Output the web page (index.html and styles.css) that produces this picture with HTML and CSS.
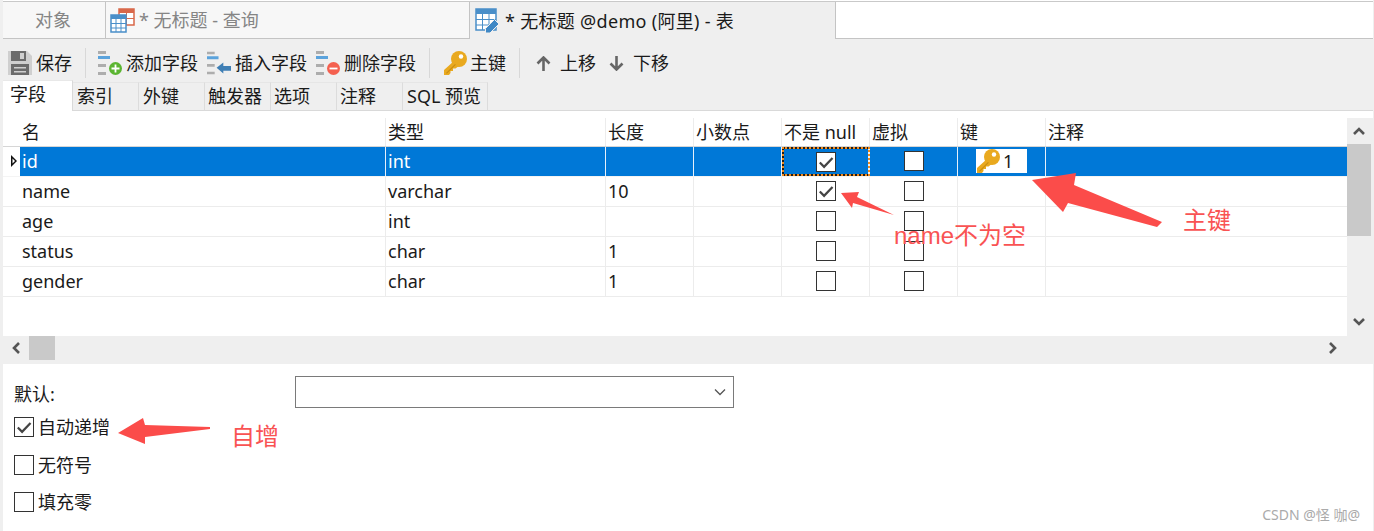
FILE: index.html
```html
<!DOCTYPE html>
<html lang="zh">
<head>
<meta charset="utf-8">
<title>无标题 @demo (阿里) - 表</title>
<link rel="stylesheet" href="styles.css">
</head>
<body>
<svg width="0" height="0" class="defs">
  <defs>
    <symbol id="key" viewBox="0 0 24 24">
      <circle cx="16" cy="8" r="8" fill="#e9a91f"/>
      <path fill="#e9a91f" d="M11 10L1 19v5h5l1.500-2v-2h2.500v-2.500h2.500L17 14z"/>
      <path fill="#c98d12" d="M3 22l9-9 .8.8-9 9z"/>
      <circle cx="18" cy="5.500" r="2.200" fill="#fff"/>
    </symbol>
    <symbol id="check" viewBox="2 2 16 16">
      <path d="M4.500 10.500l3.800 3.800 7.500-7.800" fill="none" stroke="#444" stroke-width="2"/>
    </symbol>
    <symbol id="lines" viewBox="0 0 24 24">
      <path fill="#adadad" d="M0 0h8v3H0zM0 13h8v3H0zM0 21h8v3H0z"/>
      <path fill="#5ba3dc" d="M0 5h12v3H0z"/>
    </symbol>
  </defs>
</svg>
<div class="app">
  <div class="tabs">
    <div class="tab tab-obj">对象</div>
    <div class="tab tab-query">
      <svg class="tab-icon" width="25" height="25" viewBox="0 0 25 25">
        <path fill="#fff" stroke="#d9684a" stroke-width="1.500" d="M9 1h15v16H9z"/>
        <path fill="#d9684a" d="M9 1h15v4H9z"/>
        <path stroke="#d9684a" d="M16.500 5v12M9 10.500h15"/>
        <path fill="#fff" stroke="#4a8fc9" stroke-width="1.500" d="M1 7h15v17H1z"/>
        <path fill="#4a8fc9" d="M1 7h15v4H1z"/>
        <path stroke="#4a8fc9" d="M6 11v13M11 11v13M1 15.500h15M1 20h15"/>
      </svg>
      <span>* 无标题 - 查询</span>
    </div>
    <div class="tab tab-active">
      <svg class="tab-icon" width="25" height="25" viewBox="0 0 25 25">
        <path fill="#fff" stroke="#4a8fc9" stroke-width="1.500" d="M1 1h20v21H1z"/>
        <path fill="#4a8fc9" d="M1 1h20v5H1z"/>
        <path stroke="#4a8fc9" d="M7.500 6v16M14 6v16M1 11.500h20M1 17h20"/>
        <path fill="#3f88c5" stroke="#efefef" d="M10.500 20.500l9-9 4.500 4.500-9 9h-4.500z"/>
      </svg>
      <span class="tab-title">* 无标题 @demo (阿里) - 表</span>
    </div>
    <div class="tab-rest"></div>
  </div>

  <div class="toolbar">
    <div class="tool tool-save">
      <svg width="24" height="24" viewBox="0 0 24 24">
        <path fill="#cfcfcf" d="M0 0h19l5 5v19H0z"/>
        <path fill="#6b6b6b" d="M3 0h15v10H3zM3 13h18v11H3z"/>
        <path fill="#cfcfcf" d="M12 2h4v6h-4z"/>
        <path fill="#cfcfcf" d="M6 16h12v1.500H6zM6 20h12v1.500H6z"/>
      </svg>
      <span>保存</span>
    </div>
    <div class="sep"></div>
    <div class="tool tool-field">
      <svg width="24" height="24" viewBox="0 0 24 24">
        <use href="#lines"/>
        <circle cx="17.500" cy="17.500" r="6.500" fill="#5bb531"/>
        <path stroke="#fff" stroke-width="1.800" d="M13.500 17.500h8M17.500 13.500v8"/>
      </svg>
      <span>添加字段</span>
    </div>
    <div class="tool tool-field">
      <svg width="24" height="24" viewBox="0 0 25 24">
        <use href="#lines" width="24" height="24"/>
        <path fill="#3f7fb5" d="M10 17l7-5.500V15h8v5h-8v3z"/>
      </svg>
      <span>插入字段</span>
    </div>
    <div class="tool tool-field tool-field-last">
      <svg width="24" height="24" viewBox="0 0 24 24">
        <use href="#lines"/>
        <circle cx="17.500" cy="17.500" r="6.500" fill="#f4604f"/>
        <path stroke="#fff" stroke-width="1.800" d="M13.500 17.500h8"/>
      </svg>
      <span>删除字段</span>
    </div>
    <div class="sep sep-b"></div>
    <div class="tool tool-key">
      <svg width="24" height="24"><use href="#key"/></svg>
      <span>主键</span>
    </div>
    <div class="sep sep-c"></div>
    <div class="tool tool-move">
      <svg width="15" height="15" viewBox="0 0 15 15">
        <path fill="none" stroke="#666" stroke-width="2.600" d="M1.500 7.500l6-6 6 6M7.500 2v13"/>
      </svg>
      <span>上移</span>
    </div>
    <div class="tool tool-move">
      <svg width="15" height="15" viewBox="0 0 15 15">
        <path fill="none" stroke="#666" stroke-width="2.600" d="M1.500 7.500l6 6 6-6M7.500 13V0"/>
      </svg>
      <span>下移</span>
    </div>
  </div>

  <div class="subtabs">
    <div class="subtab subtab-active">字段</div>
    <div class="subtab subtab-shift">索引</div>
    <div class="subtab subtab-shift">外键</div>
    <div class="subtab">触发器</div>
    <div class="subtab">选项</div>
    <div class="subtab">注释</div>
    <div class="subtab subtab-wide">SQL 预览</div>
  </div>

  <div class="grid-area">
    <div class="grid-main">
      <div class="table">
        <div class="row row-head">
          <div class="cell cell-mark"></div>
          <div class="cell">名</div><div class="cell">类型</div><div class="cell">长度</div><div class="cell">小数点</div><div class="cell">不是 null</div><div class="cell">虚拟</div><div class="cell">键</div><div class="cell">注释</div>
        </div>
        <div class="row row-selected">
          <div class="cell cell-mark">
            <svg width="8" height="12" viewBox="0 0 8 12"><path d="M1 0l6 6-6 6z" fill="#111"/><path d="M2.500 3.500L5 6l-2.500 2.500z" fill="#fff"/></svg>
          </div>
          <div class="cell">id</div><div class="cell">int</div><div class="cell"></div><div class="cell"></div>
          <div class="cell cell-box cell-focus"><span class="box"><svg width="18" height="18"><use href="#check"/></svg></span></div>
          <div class="cell cell-box"><span class="box"></span></div>
          <div class="cell cell-keyval"><span class="keyval"><svg width="24" height="24"><use href="#key"/></svg><span>1</span></span></div>
          <div class="cell"></div>
        </div>
        <div class="row">
          <div class="cell cell-mark"></div>
          <div class="cell">name</div><div class="cell">varchar</div><div class="cell">10</div><div class="cell"></div>
          <div class="cell cell-box"><span class="box"><svg width="18" height="18"><use href="#check"/></svg></span></div>
          <div class="cell cell-box"><span class="box"></span></div>
          <div class="cell"></div><div class="cell"></div>
        </div>
        <div class="row">
          <div class="cell cell-mark"></div>
          <div class="cell">age</div><div class="cell">int</div><div class="cell"></div><div class="cell"></div>
          <div class="cell cell-box"><span class="box"></span></div>
          <div class="cell cell-box"><span class="box"></span></div>
          <div class="cell"></div><div class="cell"></div>
        </div>
        <div class="row">
          <div class="cell cell-mark"></div>
          <div class="cell">status</div><div class="cell">char</div><div class="cell">1</div><div class="cell"></div>
          <div class="cell cell-box"><span class="box"></span></div>
          <div class="cell cell-box"><span class="box"></span></div>
          <div class="cell"></div><div class="cell"></div>
        </div>
        <div class="row">
          <div class="cell cell-mark"></div>
          <div class="cell">gender</div><div class="cell">char</div><div class="cell">1</div><div class="cell"></div>
          <div class="cell cell-box"><span class="box"></span></div>
          <div class="cell cell-box"><span class="box"></span></div>
          <div class="cell"></div><div class="cell"></div>
        </div>
      </div>
      <div class="vscroll">
        <svg class="chev" width="14" height="10" viewBox="0 0 14 10"><path d="M2 8l5-5 5 5" fill="none" stroke="#555" stroke-width="2.600"/></svg>
        <div class="vthumb"></div>
        <svg class="chev chev-down" width="14" height="10" viewBox="0 0 14 10"><path d="M2 2l5 5 5-5" fill="none" stroke="#555" stroke-width="2.600"/></svg>
      </div>
    </div>
    <div class="hscroll">
      <svg class="hchev" width="10" height="14" viewBox="0 0 10 14"><path d="M8 2L3 7l5 5" fill="none" stroke="#555" stroke-width="2.600"/></svg>
      <div class="hthumb"></div>
      <svg class="hchev hchev-right" width="10" height="14" viewBox="0 0 10 14"><path d="M2 2l5 5-5 5" fill="none" stroke="#555" stroke-width="2.600"/></svg>
    </div>
  </div>

  <div class="panel">
    <div class="default-row">
      <span class="default-label">默认:</span>
      <div class="combo">
        <svg width="12" height="8" viewBox="0 0 12 8"><path d="M1 1.500l5 5 5-5" fill="none" stroke="#555" stroke-width="1.300"/></svg>
      </div>
    </div>
    <div class="opts">
      <div class="opt"><span class="box"><svg width="18" height="18"><use href="#check"/></svg></span><span>自动递增</span></div>
      <div class="opt"><span class="box"></span><span>无符号</span></div>
      <div class="opt"><span class="box"></span><span>填充零</span></div>
    </div>
  </div>

  <svg class="marks" width="1374" height="531" viewBox="0 0 1374 531">
    <path fill="#fb4c4a" d="M1032 180L1076 173 1074 185 1162 222 1157 227 1068 203 1063 212z"/>
    <path fill="#fb4c4a" d="M841 193L859 192 857 197 894 215 853 203 852 208z"/>
    <path fill="#fb4c4a" d="M118 433L143 418 145 425 210 427 210 429 145 437 145 444z"/>
  </svg>
  <span class="note note-key">主键</span>
  <span class="note note-name">name不为空</span>
  <span class="note note-inc">自增</span>
  <span class="watermark">CSDN @怪 咖@</span>
</div>
</body>
</html>
```
FILE: styles.css
```css
* { box-sizing: border-box; }
html, body { margin: 0; padding: 0; }
body {
  width: 1374px;
  height: 531px;
  overflow: hidden;
  background: #fff;
  color: #1a1a1a;
  font-family: "Noto Sans", "Noto Sans CJK SC", sans-serif;
  font-size: 18px;
  line-height: 24px;
}
svg { display: block; flex: none; }
.defs { position: absolute; }
.app {
  position: relative;
  width: 1374px;
  height: 531px;
  border-left: 3px solid #efefef;
  border-right: 1px solid #efefef;
  display: flex;
  flex-direction: column;
}

/* document tabs */
.tabs {
  display: flex;
  height: 38px;
  margin-top: 1px;
  border-top: 1px solid #c9c9c9;
}
.tab {
  display: flex;
  align-items: center;
  border-bottom: 1px solid #c4c4c4;
  border-right: 1px solid #c4c4c4;
  background: #f7f7f7;
  color: #858585;
}
.tab-obj { width: 103px; padding-left: 32px; }
.tab-query { width: 364px; padding-left: 4px; gap: 4px; }
.tab-active {
  width: 366px;
  padding-left: 5px;
  gap: 5px;
  background: #efefef;
  color: #1a1a1a;
  border-bottom: 0;
}
.tab-title { letter-spacing: .3px; }
.tab-rest { flex: 1; border-bottom: 1px solid #c4c4c4; }

/* toolbar */
.toolbar {
  display: flex;
  align-items: center;
  height: 41px;
  background: #efefef;
  padding: 7px 0 0 5px;
}
.tool { display: flex; align-items: center; gap: 4px; }
.sep { width: 1px; height: 30px; background: #d8d8d8; margin: 0 12px 0 13px; }
.tool-field { margin-right: 9px; }
.tool-field-last { margin-right: 0; }
.sep-b { margin: 0 13px 0 13px; }
.tool-key { gap: 3px; }
.sep-c { margin: 0 16px 0 13px; }
.tool-move { gap: 9px; margin-right: 13px; }

/* sub tabs */
.subtabs {
  display: flex;
  align-items: flex-end;
  height: 31px;
  background: #efefef;
  border-bottom: 1px solid #d9d9d9;
}
.subtab {
  width: 66px;
  height: 29px;
  margin-bottom: -1px;
  padding-left: 3px;
  line-height: 26px;
  border-right: 1px solid #dcdcdc;
  border-top: 1px solid #e6e6e6;
  border-bottom: 1px solid #d9d9d9;
}
.subtab-shift { padding-left: 4px; }
.subtab-active {
  width: 70px;
  height: 31px;
  padding-left: 7px;
  background: #fff;
  border-bottom: 0;
  border-top: 1px solid #e8e8e8;
  border-right: 1px solid #d9d9d9;
  line-height: 27px;
}
.subtab-wide { width: 85px; padding-left: 4px; white-space: nowrap; }

/* grid */
.grid-area { display: flex; flex-direction: column; height: 253px; }
.grid-main { display: flex; flex: 1; min-height: 0; }
.table { flex: 1; }
.row {
  display: grid;
  grid-template-columns: 17px 366px 220px repeat(5, 88px) 1fr;
  height: 30px;
  border-bottom: 1px solid #ececec;
}
.row-head {
  height: 36px;
  padding-top: 7px;
  border-bottom: 1px solid #d6d6d6;
}
.cell {
  display: flex;
  align-items: center;
  padding: 0 0 2px 2px;
  border-right: 1px solid #ececec;
  white-space: nowrap;
  overflow: hidden;
}
.row-head .cell { padding-bottom: 0; }
.cell:last-child { border-right: 0; }
.cell-mark { border-right: 0; padding: 0 0 2px 7px; }
.row-selected { border-bottom-color: #f4f4f4; }
.row-selected .cell:not(.cell-mark) {
  background: #0078d7;
  color: #fff;
  border-right-color: #e6f0fa;
}
.cell-box { justify-content: center; padding-left: 0; }
.row-selected .cell-focus {
  padding: 0;
  border: 2px solid #1d1d1d;
  outline: 2px dotted #f08a1c;
  outline-offset: -2px;
}
.box {
  display: flex;
  align-items: center;
  justify-content: center;
  width: 20px;
  height: 20px;
  flex: none;
  background: #fff;
  border: 1.500px solid #333;
}
.cell-keyval { padding-left: 18px; }
.keyval {
  display: flex;
  align-items: center;
  width: 51px;
  height: 24px;
  background: #fff;
  color: #1a1a1a;
  gap: 3px;
}
.vscroll {
  position: relative;
  width: 26px;
  margin-top: 7px;
  background: #efefef;
  padding-top: 8px;
}
.chev { margin-left: 5px; }
.vthumb {
  position: absolute;
  top: 26px;
  left: 0;
  width: 24px;
  height: 92px;
  background: #c9c9c9;
}
.chev-down { position: absolute; bottom: 9px; left: 0; }
.hscroll {
  position: relative;
  display: flex;
  align-items: center;
  height: 28px;
  background: #efefef;
  padding-left: 8px;
}
.hthumb {
  position: absolute;
  top: 0;
  left: 26px;
  width: 26px;
  height: 24px;
  background: #c9c9c9;
}
.hchev { margin-bottom: 4px; }
.hchev-right { position: absolute; right: 35px; top: 5px; }

/* bottom panel */
.panel { flex: 1; padding: 12px 0 0 11px; }
.default-row { display: flex; align-items: center; height: 32px; }
.default-label { width: 281px; padding-top: 3px; }
.combo {
  display: flex;
  align-items: center;
  justify-content: flex-end;
  width: 439px;
  height: 32px;
  padding-right: 7px;
  border: 1px solid #7a7a7a;
}
.opts { display: flex; flex-direction: column; gap: 17.500px; margin-top: 9px; }
.opt { display: flex; align-items: center; gap: 4px; height: 20px; }

/* annotations */
.marks { position: absolute; left: -3px; top: 0; pointer-events: none; }
.note {
  position: absolute;
  color: #f95353;
  font-size: 24px;
  line-height: 32px;
  white-space: nowrap;
}
.note-key { left: 1180px; top: 204px; }
.note-name { left: 891px; top: 220px; font-family: "Liberation Sans", "Noto Sans CJK SC", sans-serif; }
.note-inc { left: 228px; top: 420px; }
.watermark {
  position: absolute;
  right: 13px;
  bottom: 7px;
  color: #aaa;
  font-size: 14px;
  line-height: 18px;
}
```
